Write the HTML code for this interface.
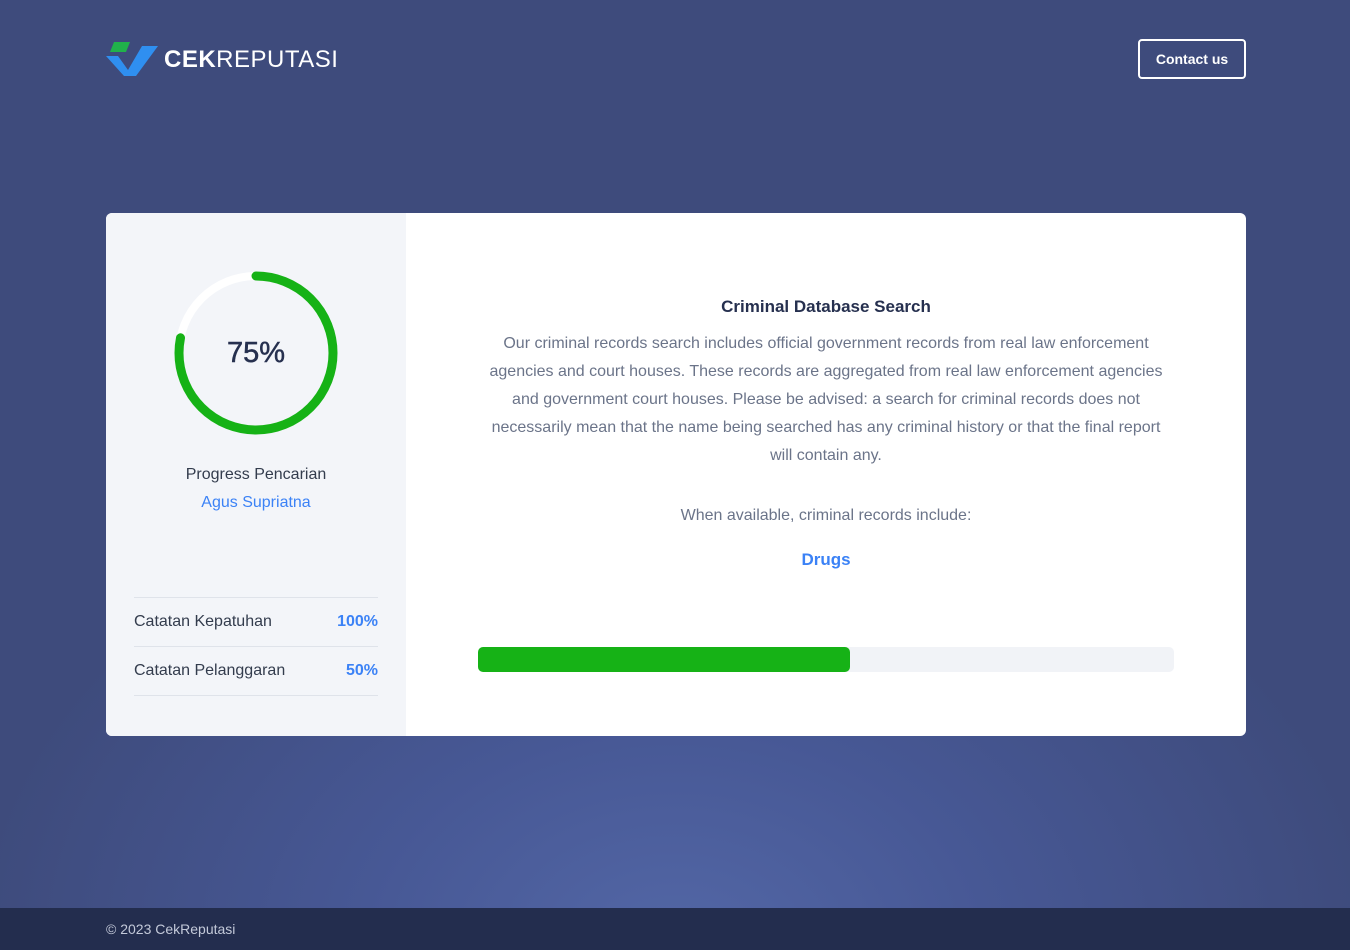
<!DOCTYPE html>
<html><head><meta charset="utf-8"><style>
*{margin:0;padding:0;box-sizing:border-box}
body{width:1350px;height:950px;overflow:hidden;font-family:"Liberation Sans",sans-serif;background:radial-gradient(ellipse 700px 500px at 675px 950px,#5367a6 0%,#475895 45%,#3e4b7c 100%);position:relative}
.logo{position:absolute;left:106px;top:42px;display:flex;align-items:center}
.logo span{font-size:24px;color:#fff;letter-spacing:0.5px;margin-left:4px}
.btn{position:absolute;left:1138px;top:39px;width:108px;height:40px;border:2px solid #fff;border-radius:4px;color:#fff;font-size:14px;font-weight:bold;text-align:center;line-height:36px}
.card{position:absolute;left:106px;top:213px;width:1140px;height:523px;background:#fff;border-radius:6px;overflow:hidden}
.left{position:absolute;left:0;top:0;width:300px;height:523px;background:#f3f5f9}
.pct{position:absolute;left:0;width:300px;top:124px;text-align:center;font-size:29px;color:#26304f;-webkit-text-stroke:0.5px #26304f}
.lbl{position:absolute;width:300px;text-align:center;font-size:16px}
.row{position:absolute;left:28px;width:244px;height:49px;border-top:1px solid #dfe3ea;font-size:16px;color:#333c4d;line-height:48px}
.row b{position:absolute;right:0;color:#3b82f6}
.right{position:absolute;left:370px;width:700px;text-align:center}
footer{position:absolute;left:0;top:908px;width:1350px;height:42px;background:#232d4e;color:#c3c9d9;font-size:14px;padding-left:106px;line-height:42px}
</style></head><body>
<div class="logo">
<svg width="54" height="36" viewBox="0 0 54 36"><polygon points="8,0 24,0 20,10 4,10" fill="#21b24b"/><polygon points="0,14 12,14 22,28 36,4 52,4 30,34 18,34" fill="#2f8ff0"/></svg>
<span><b>CEK</b>REPUTASI</span></div>
<div class="btn">Contact us</div>
<div class="card">
<div class="left">
<svg style="position:absolute;left:67px;top:57px" width="166" height="166" viewBox="0 0 166 166"><circle cx="83" cy="83" r="77" fill="none" stroke="#fff" stroke-width="8"/><circle cx="83" cy="83" r="77" fill="none" stroke="#16b216" stroke-width="9" stroke-linecap="round" stroke-dasharray="378 500" transform="rotate(-90 83 83)"/></svg>
<div class="pct">75%</div>
<div class="lbl" style="top:253px;color:#333c4d">Progress Pencarian</div>
<div class="lbl" style="top:281px;color:#3b82f6">Agus Supriatna</div>
<div class="row" style="top:384px">Catatan Kepatuhan<b>100%</b></div>
<div class="row" style="top:433px;border-bottom:1px solid #dfe3ea;height:50px">Catatan Pelanggaran<b>50%</b></div>
</div>
<div class="right" style="top:84px;font-size:17px;font-weight:bold;color:#26304f">Criminal Database Search</div>
<div class="right" style="top:117px;left:376px;width:688px;font-size:16px;line-height:28px;color:#6b7489">Our criminal records search includes official government records from real law enforcement agencies and court houses. These records are aggregated from real law enforcement agencies and government court houses. Please be advised: a search for criminal records does not necessarily mean that the name being searched has any criminal history or that the final report will contain any.</div>
<div class="right" style="top:294px;font-size:16px;color:#6b7489">When available, criminal records include:</div>
<div class="right" style="top:337px;font-size:17px;font-weight:bold;color:#3b82f6">Drugs</div>
<div style="position:absolute;left:372px;top:434px;width:696px;height:25px;background:#f1f3f7;border-radius:5px"><div style="width:372px;height:25px;background:#16b216;border-radius:5px"></div></div>
</div>
<footer>© 2023 CekReputasi</footer>
</body></html>
